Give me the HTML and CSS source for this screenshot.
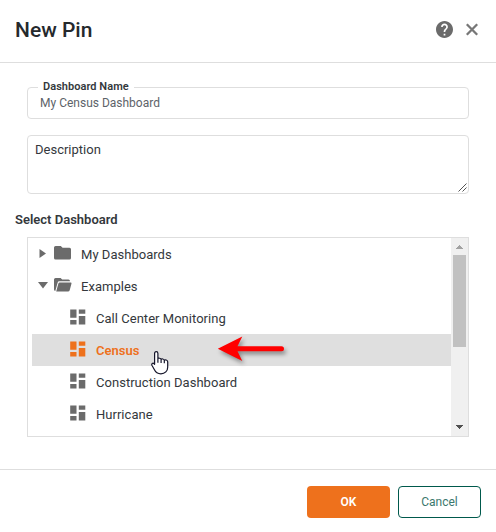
FILE: index.html
```html
<!DOCTYPE html>
<html lang="en">
<head>
<meta charset="utf-8">
<title>New Pin</title>
<link rel="stylesheet" href="styles.css">
</head>
<body>
<svg class="defs" aria-hidden="true">
  <symbol id="tile" viewBox="0 0 16 16"><path d="M.2.5h6.300v8.300H.2zM8.800.5h6.500v4.300H8.800zM8.800 7h6.500v8.500H8.800zM.2 11h6.300v4.500H.2z"/></symbol>
</svg>
<div class="dialog">
  <header class="header">
    <h1 class="title">New Pin</h1>
    <svg class="help" viewBox="2 2 20 20"><path d="M12 2C6.480 2 2 6.480 2 12s4.480 10 10 10 10-4.480 10-10S17.520 2 12 2zm1 17h-2v-2h2v2zm2.070-7.750l-.9.920C13.450 12.900 13 13.500 13 15h-2v-.5c0-1.100.45-2.100 1.170-2.830l1.240-1.260c.37-.36.59-.86.59-1.410 0-1.100-.9-2-2-2s-2 .9-2 2H8c0-2.210 1.790-4 4-4s4 1.790 4 4c0 .88-.36 1.680-.93 2.250z"/></svg>
    <svg class="close" viewBox="0 0 14 14"><path d="M1.800 2.300l10.400 10.400M12.200 2.300L1.800 12.700"/></svg>
  </header>
  <main class="content">
    <div class="field">
      <span class="field-label">Dashboard Name</span>
      <span class="field-value">My Census Dashboard</span>
    </div>
    <div class="description">Description
      <svg class="grip" viewBox="0 0 9 9"><path d="M.5 8.500l8-8M4.500 8.500l4-4"/></svg>
    </div>
    <h2 class="section">Select Dashboard</h2>
    <div class="tree">
      <div class="rows">
        <div class="row">
          <svg class="caret" viewBox="0 0 10 10"><path d="M1.500 0v9L8 4.500z"/></svg>
          <svg class="folder" viewBox="0 0 18 14"><path d="M1.600 0h5.200l1.800 1.800h6.900Q17 1.800 17 3.300v8.800q0 1.500-1.500 1.500H1.600Q0 13.600 0 12V1.600Q0 0 1.600 0z"/></svg>
          <span>My Dashboards</span>
        </div>
        <div class="row">
          <svg class="caret" viewBox="0 0 10 10"><path d="M0 1h10L5 7.500z"/></svg>
          <svg class="folder" viewBox="0 0 18 14"><path d="M1.600 0h5l1.600 1.600h6.300q1.500 0 1.500 1.700H5.200q-1.200 0-1.500 1.200L1.300 12.900Q0 12.700 0 11.600V1.600Q0 0 1.600 0zM5.600 4.400h11q1.200 0 .9 1.200l-1.800 6.600q-.4 1.400-1.700 1.400H2.200l2.200-8.200q.3-1 1.200-1z"/></svg>
          <span>Examples</span>
        </div>
        <div class="row leaf"><svg class="tile"><use href="#tile"/></svg><span>Call Center Monitoring</span></div>
        <div class="row leaf selected"><svg class="tile"><use href="#tile"/></svg><span>Census</span></div>
        <div class="row leaf"><svg class="tile"><use href="#tile"/></svg><span>Construction Dashboard</span></div>
        <div class="row leaf"><svg class="tile"><use href="#tile"/></svg><span>Hurricane</span></div>
      </div>
      <div class="scrollbar">
        <svg class="scroll-arrow up" viewBox="0 0 7 4"><path d="M3 0h1v1h1v1h1v1h1v1H0V3h1V2h1V1h1z"/></svg>
        <div class="thumb"></div>
        <svg class="scroll-arrow down" viewBox="0 0 7 4"><path d="M0 0h7v1H6v1H5v1H4v1H3V3H2V2H1V1H0z"/></svg>
      </div>
      <svg class="pointer" viewBox="0 0 20 26"><path d="M5.200 1.700c1 0 1.700.7 1.700 1.700v5.200c.3-.6 3-.6 3.200.8.500-.8 3-.6 3.200.9.600-.8 3.400-.4 3.400 1.500v5.400c0 3.600-2.700 6.600-6.800 6.600-3.500 0-5.400-1.700-6.600-4.300L.9 15.200c-.6-1.500.9-2.700 2.200-1.500l.5.600V3.400c0-1 .6-1.700 1.600-1.700zM6.900 8.500v4.200M10.100 9.400v3.600M13.300 10.300v3"/></svg>
      <svg class="arrow" viewBox="0 0 76 36"><path d="M3.800 14.700L28.300 2.500l-4.800 9.700H67.500a2.500 2.500 0 0 1 0 5H23.500L28.300 27z"/></svg>
    </div>
  </main>
  <footer class="footer">
    <button class="button primary">OK</button>
    <button class="button secondary">Cancel</button>
  </footer>
</div>
</body>
</html>
```

FILE: styles.css
```css
* { box-sizing: border-box; }
body {
  margin: 0;
  font-family: Roboto, "Liberation Sans", sans-serif;
  font-size: 13px;
  color: #34383c;
  background: #fff;
}
svg { display: block; flex: none; fill: #6b6b6b; }
.defs { position: absolute; width: 0; height: 0; }
.dialog { display: flex; flex-direction: column; width: 496px; height: 532px; overflow: hidden; }
.header {
  display: flex;
  align-items: center;
  height: 63px;
  padding: 0 17px 4px 15px;
  border-bottom: 1px solid #dedede;
}
.title {
  flex: 1;
  margin: 0;
  padding-top: 2px;
  font-size: 21px;
  font-weight: 500;
  line-height: 26px;
  letter-spacing: 0;
  color: #25292d;
}
.help { width: 17px; height: 17px; margin-right: 12px; }
.close { width: 14px; height: 14px; fill: none; stroke: #777; stroke-width: 2.300; }
.content { flex: 1; padding: 24px 27px 0; }
.field {
  position: relative;
  display: flex;
  align-items: center;
  height: 32px;
  padding-left: 12px;
  border: 1px solid #dedede;
  border-radius: 4px;
}
.field-label {
  position: absolute;
  top: -8px;
  left: 10px;
  padding: 0 5px;
  background: #fff;
  font-size: 11px;
  font-weight: 600;
  line-height: 14px;
  letter-spacing: .04px;
}
.field-value { font-size: 12px; color: #5d6369; }
.description {
  position: relative;
  height: 59px;
  margin-top: 16px;
  padding: 6px 7px;
  border: 1px solid #dedede;
  border-radius: 4px;
  line-height: 16px;
}
.grip { position: absolute; right: 1px; bottom: 1px; width: 9px; height: 9px; fill: none; stroke: #555; stroke-width: 1; }
.section { margin: 18px 0 9px -12px; font-size: 13px; font-weight: 600; line-height: 16px; }
.tree {
  position: relative;
  display: flex;
  height: 200px;
  border: 1px solid #dedede;
}
.rows { flex: 1; padding-left: 4px; }
.row { display: flex; align-items: center; height: 32px; padding-left: 6px; }
.row span { letter-spacing: .03px; }
.caret { width: 10px; height: 10px; margin-right: 6px; }
.folder { width: 18px; height: 14px; margin: 0 9px 2px 0; }
.leaf { padding-left: 38px; }
.tile { width: 16px; height: 16px; margin: 0 10px 2px 0; }
.selected { background: #dfdfdf; color: #ee711c; font-weight: 600; }
.selected .tile { fill: #ee711c; }
.scrollbar {
  display: flex;
  flex-direction: column;
  align-items: center;
  width: 17px;
  background: #f0f0f0;
}
.scroll-arrow { width: 7px; height: 4px; shape-rendering: crispEdges; }
.up { margin: 7px 0 6px; fill: #a2a2a2; }
.down { margin: auto 0 7px; fill: #505050; }
.thumb { width: 13px; height: 92px; background: #c1c1c1; }
.pointer {
  position: absolute;
  left: 123px;
  top: 112px;
  width: 20px;
  height: 26px;
  fill: #fff;
  stroke: #15152a;
  stroke-width: 1.200;
  stroke-linejoin: round;
}
.arrow { position: absolute; left: 186px; top: 96px; width: 76px; height: 36px; fill: #f00; filter: drop-shadow(2px 3px 2px rgba(0, 0, 0, .4)); }
.footer {
  display: flex;
  justify-content: flex-end;
  gap: 8px;
  height: 63px;
  padding: 16px 15px 0;
  border-top: 1px solid #dedede;
}
.button { width: 83px; height: 32px; padding: 0; border-radius: 4px; font: 12px Roboto, "Liberation Sans", sans-serif; }
.primary { border: 0; background: #ee711c; color: #fff; font-weight: 600; }
.secondary { border: 1px solid #00594c; background: #fff; color: #3b786e; }
```
